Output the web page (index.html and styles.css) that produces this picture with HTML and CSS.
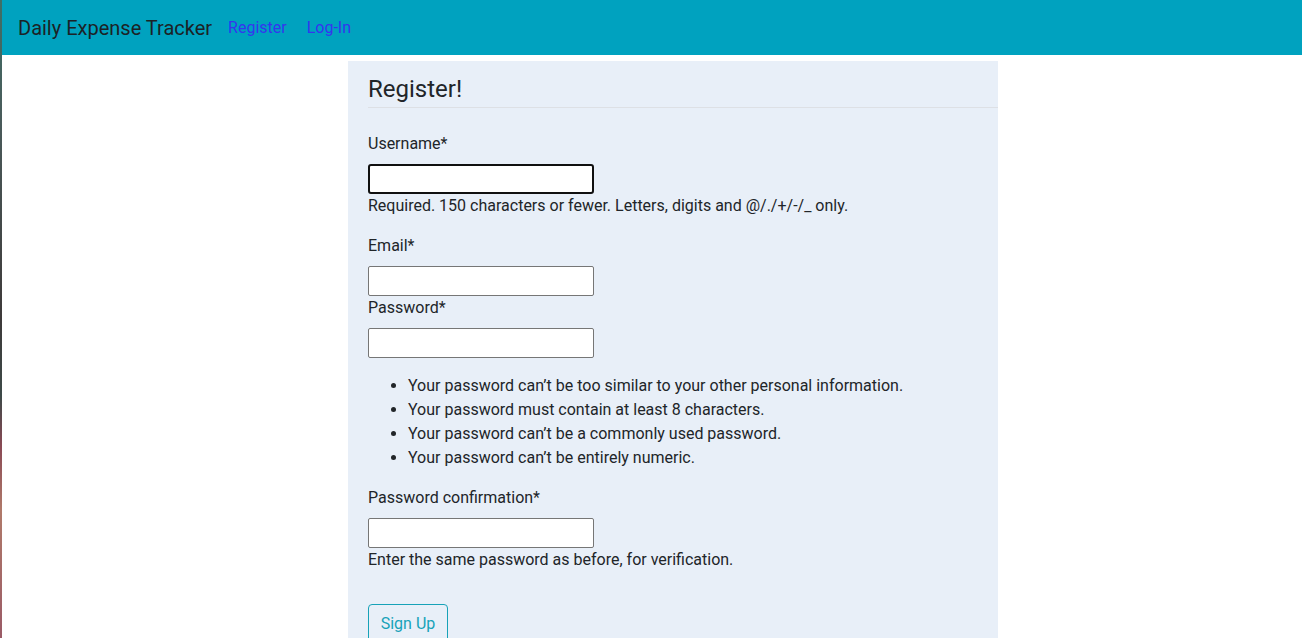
FILE: index.html
```html
<!DOCTYPE html>
<html lang="en">
<head>
<meta charset="utf-8">
<title>Daily Expense Tracker</title>
<link rel="stylesheet" href="styles.css">
</head>
<body>
<div class="edge"></div>
<div class="page">
  <header class="navbar">
    <span class="brand">Daily Expense Tracker</span>
    <a class="nav-link" href="#">Register</a>
    <a class="nav-link" href="#">Log-In</a>
  </header>
  <main class="main">
    <section class="content-section">
      <form>
        <div class="legend">Register!</div>
        <div class="group">
          <label class="label">Username*</label>
          <input class="input focused" type="text">
          <div class="help">Required. 150 characters or fewer. Letters, digits and @/./+/-/_ only.</div>
        </div>
        <div class="group tight">
          <label class="label">Email*</label>
          <input class="input" type="email">
        </div>
        <div class="group">
          <label class="label">Password*</label>
          <input class="input" type="password">
          <ul class="rules">
            <li>Your password can’t be too similar to your other personal information.</li>
            <li>Your password must contain at least 8 characters.</li>
            <li>Your password can’t be a commonly used password.</li>
            <li>Your password can’t be entirely numeric.</li>
          </ul>
        </div>
        <div class="group last">
          <label class="label">Password confirmation*</label>
          <input class="input" type="password">
          <div class="help">Enter the same password as before, for verification.</div>
        </div>
        <button class="btn" type="button">Sign Up</button>
      </form>
    </section>
  </main>
</div>
</body>
</html>
```
FILE: styles.css
```css
* { box-sizing: border-box; }
html, body { margin: 0; padding: 0; height: 100%; }
body {
  display: flex;
  font-family: Roboto, "Liberation Sans", sans-serif;
  font-size: 16px;
  line-height: 24px;
  color: #212529;
  background: #ffffff;
  overflow: hidden;
}
.edge {
  width: 2px;
  flex: 0 0 2px;
  background: linear-gradient(to bottom, #3f6f66 0%, #4a5a5a 20%, #3e3a3a 50%, #3d4a48 62%, #8a4a55 70%, #b07a6a 80%, #9a5a66 100%);
}
.page { flex: 1; display: flex; flex-direction: column; min-width: 0; }
.navbar {
  flex: 0 0 55px;
  height: 55px;
  background: #00a2bf;
  display: flex;
  align-items: center;
  padding-left: 16px;
}
.brand {
  font-size: 20px;
  color: #1c2226;
  margin-right: 16px;
}
.nav-link {
  color: #3535ee;
  text-decoration: none;
  margin-right: 20px;
  font-size: 16px;
}
.main {
  flex: 0 0 auto;
  padding-top: 6px;
  padding-left: 346px;
}
.content-section {
  width: 650px;
  background: #e8eff8;
  padding: 10px 0 40px 20px;
}
.legend {
  font-size: 24px;
  line-height: 36px;
  border-bottom: 1px solid #dde0e5;
  margin-bottom: 24px;
  color: #212529;
}
.group { margin-bottom: 16px; }
.group.tight { margin-bottom: 0; }
.group.last { margin-bottom: 32px; }
.label { display: block; margin-bottom: 8px; }
.input {
  display: block;
  width: 226px;
  height: 30px;
  border: 1px solid #767676;
  border-radius: 2px;
  background: #fff;
  padding: 1px 2px;
  font: inherit;
}
.input.focused {
  border: 2px solid #101010;
  border-radius: 3px;
}
.rules {
  margin: 16px 0 0;
  padding-left: 40px;
}
.btn {
  display: block;
  width: 80px;
  font: inherit;
  font-size: 16px;
  line-height: 24px;
  color: #17a2b8;
  background: transparent;
  border: 1px solid #17a2b8;
  border-radius: 4px;
  padding: 7px 0 5px;
  text-align: center;
  white-space: nowrap;
}
```
